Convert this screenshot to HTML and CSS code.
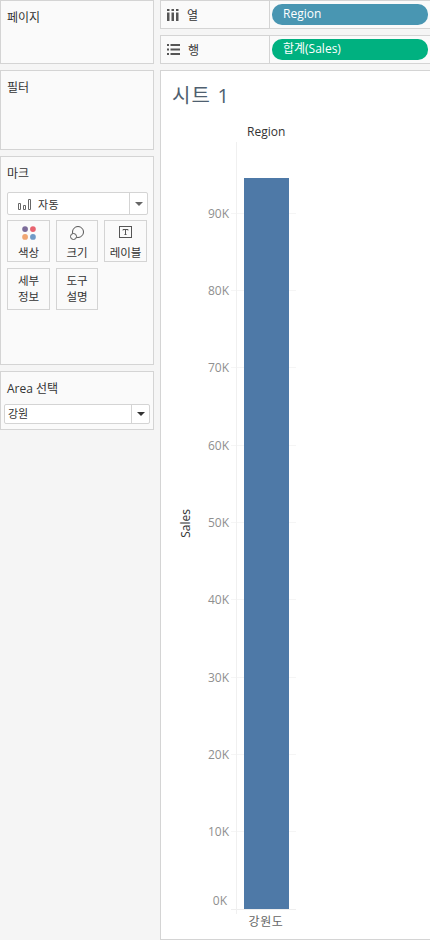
FILE: index.html
```html
<!DOCTYPE html>
<html lang="ko">
<head>
  <meta charset="UTF-8" />
  <title>시트 1</title>
  <link rel="stylesheet" href="styles.css">
</head>
<body>
  <div class="layout">
    <div class="sidebar">
      <div class="card card-pages"><div class="card-title">페이지</div></div>
      <div class="card card-filters"><div class="card-title">필터</div></div>
      <div class="card card-marks">
        <div class="card-title">마크</div>
        <div class="marks-select">
          <div class="marks-value">
            <svg width="15" height="12" viewBox="0 0 15 12"><path d="M1.5 5.5h2v6h-2zM6.5 7.5h2v4h-2zM11.5 1.5h2v10h-2z" fill="none" stroke="#666"/></svg>
            <span>자동</span>
          </div>
          <div class="select-arrow"><i class="arrow"></i></div>
        </div>
        <div class="marks-grid">
          <div class="mark-btn">
            <svg width="14" height="14" viewBox="0 0 16 16">
              <circle cx="3.5" cy="3.5" r="3.3" fill="#7b6b99"/>
              <circle cx="12.5" cy="3.5" r="3.3" fill="#e8636f"/>
              <circle cx="3.5" cy="12.5" r="3.3" fill="#f0a672"/>
              <circle cx="12.5" cy="12.5" r="3.3" fill="#6f9ac7"/>
            </svg>
            <span>색상</span>
          </div>
          <div class="mark-btn">
            <svg width="14" height="14" viewBox="0 0 14 14" fill="none" stroke="#555">
              <circle cx="8" cy="6" r="5.5"/>
              <circle cx="3.5" cy="10.5" r="3" fill="#fafafa"/>
            </svg>
            <span>크기</span>
          </div>
          <div class="mark-btn">
            <svg width="14" height="14" viewBox="0 0 14 14" fill="none" stroke="#555">
              <rect x="0.5" y="0.5" width="12" height="11"/>
              <path d="M4 4.5v-1h5v1M6.5 3.5v5M5.5 8.5h2"/>
            </svg>
            <span>레이블</span>
          </div>
          <div class="mark-btn mark-text"><span>세부<br>정보</span></div>
          <div class="mark-btn mark-text"><span>도구<br>설명</span></div>
        </div>
      </div>
      <div class="card card-area">
        <div class="card-title">Area 선택</div>
        <div class="area-select">
          <div class="area-value">강원</div>
          <div class="select-arrow"><i class="arrow arrow-dark"></i></div>
        </div>
      </div>
    </div>

    <div class="content">
      <div class="shelf">
        <div class="shelf-label">
          <svg width="12" height="12" viewBox="0 0 12 12" fill="#555"><path d="M0 0h2.5v2H0zM0 3.5h2.5V12H0zM4.5 0H7v2H4.5zM4.5 3.5H7V12H4.5zM9 0h2.5v2H9zM9 3.5h2.5V12H9z"/></svg>
          <span>열</span>
        </div>
        <div class="shelf-drop"><div class="pill pill-blue">Region</div></div>
      </div>
      <div class="shelf">
        <div class="shelf-label">
          <svg width="13" height="11" viewBox="0 0 13 11" fill="#555"><path d="M0 0h2v2H0zM3.5 0H13v2H3.5zM0 4.5h2v2H0zM3.5 4.5H13v2H3.5zM0 9h2v2H0zM3.5 9H13v2H3.5z"/></svg>
          <span>행</span>
        </div>
        <div class="shelf-drop"><div class="pill pill-green">합계(Sales)</div></div>
      </div>

      <div class="sheet">
        <h1 class="sheet-title">시트 1</h1>
        <div class="col-header">Region</div>
        <div class="chart">
          <div class="axis-title"><span>Sales</span></div>
          <div class="plot">
            <div class="axis-line"></div>
            <div class="tick"><span class="tick-label">90K</span><i class="grid"></i></div>
            <div class="tick"><span class="tick-label">80K</span><i class="grid"></i></div>
            <div class="tick"><span class="tick-label">70K</span><i class="grid"></i></div>
            <div class="tick"><span class="tick-label">60K</span><i class="grid"></i></div>
            <div class="tick"><span class="tick-label">50K</span><i class="grid"></i></div>
            <div class="tick"><span class="tick-label">40K</span><i class="grid"></i></div>
            <div class="tick"><span class="tick-label">30K</span><i class="grid"></i></div>
            <div class="tick"><span class="tick-label">20K</span><i class="grid"></i></div>
            <div class="tick"><span class="tick-label">10K</span><i class="grid"></i></div>
            <div class="tick tick-zero"><span class="tick-label">0K</span><i class="grid"></i></div>
            <div class="bar"></div>
            <div class="x-label">강원도</div>
          </div>
        </div>
      </div>
    </div>
  </div>
</body>
</html>
```

FILE: styles.css
```css
* {
  box-sizing: border-box;
}

body {
  margin: 0;
  background: #f5f5f5;
  font-family: "Open Sans", "Noto Sans CJK KR", sans-serif;
  font-size: 12px;
  color: #333;
  overflow: hidden;
}

.layout {
  display: flex;
  gap: 6px;
  height: 940px;
}

.sidebar {
  width: 154px;
  flex: none;
  display: flex;
  flex-direction: column;
  gap: 6px;
}

.card {
  background: #fafafa;
  border: 1px solid #d4d4d4;
}

.card-title {
  padding: 9px 0 0 6px;
  line-height: 16px;
}

.card-pages { height: 64px; }
.card-filters { height: 80px; }
.card-marks { height: 209px; }
.card-area { height: 59px; }

.marks-select {
  display: flex;
  height: 23px;
  margin: 10px 5px 0 6px;
  background: #fff;
  border: 1px solid #d4d4d4;
  border-radius: 2px;
}

.marks-value {
  flex: 1;
  display: flex;
  align-items: center;
  gap: 6px;
  padding-left: 9px;
  letter-spacing: 0.5px;
  font-size: 11px;
}

.select-arrow {
  width: 18px;
  display: flex;
  align-items: center;
  justify-content: center;
  border-left: 1px solid #d4d4d4;
}

.arrow {
  width: 0;
  height: 0;
  border: 4px solid transparent;
  border-top: 4px solid #666;
  border-bottom: 0;
}

.arrow-dark {
  border-top-color: #333;
}

.marks-grid {
  display: grid;
  grid-template-columns: 43px 42px 43px;
  grid-auto-rows: 42px;
  gap: 6px;
  margin: 5px 0 0 6px;
}

.mark-btn {
  display: flex;
  flex-direction: column;
  align-items: center;
  justify-content: flex-end;
  background: #fafafa;
  border: 1px solid #d4d4d4;
  font-size: 11.5px;
  line-height: 16px;
}

.mark-btn svg {
  margin-bottom: auto;
  margin-top: 5px;
}

.mark-text {
  justify-content: center;
  text-align: center;
}

.area-select {
  display: flex;
  height: 20px;
  margin: 7px 3px 0 3px;
  background: #fff;
  border: 1px solid #d4d4d4;
  border-radius: 2px;
}

.area-value {
  flex: 1;
  padding-left: 3px;
  font-size: 11px;
  line-height: 18px;
}

.content {
  flex: 1;
  min-width: 0;
  display: flex;
  flex-direction: column;
  gap: 6px;
}

.shelf {
  display: flex;
  height: 29px;
  background: #fafafa;
  border: 1px solid #d4d4d4;
  border-right: 0;
}

.shelf-label {
  width: 109px;
  display: flex;
  align-items: center;
  gap: 8px;
  padding-left: 6px;
  border-right: 1px solid #d4d4d4;
}

.shelf-drop {
  flex: 1;
  padding: 3px 2px;
}

.pill {
  height: 21px;
  padding-left: 11px;
  border-radius: 10px;
  color: #fff;
  line-height: 20px;
}

.pill-blue { background: #4996b2; }
.pill-green { background: #00b180; }

.sheet {
  flex: 1;
  min-height: 0;
  background: #fff;
  border: 1px solid #d4d4d4;
  border-right: 0;
}

.sheet-title {
  margin: 11px 0 0 11px;
  font-size: 20px;
  font-weight: 400;
  line-height: 28px;
  letter-spacing: 1.2px;
  color: #4f5f70;
}

.col-header {
  margin: 15px 0 0 86px;
  font-size: 12px;
  font-weight: 400;
  line-height: 14px;
  color: #333;
}

.chart {
  display: flex;
  margin-top: 3px;
}

.axis-title {
  width: 50px;
  display: flex;
  align-items: center;
  justify-content: center;
  height: 768px;
  padding: 0 2px 0 0;
}

.axis-title span {
  writing-mode: vertical-rl;
  transform: rotate(180deg);
  font-size: 12px;
  color: #333;
  margin-bottom: 6px;
}

.plot {
  position: relative;
  width: 85px;
  padding-top: 32.6px;
}

.axis-line {
  position: absolute;
  left: 25px;
  top: 0;
  height: 772px;
  width: 1px;
  background: #f0f0f0;
}

.tick {
  display: flex;
  align-items: center;
  height: 77.33px;
}

.tick-label {
  width: 19px;
  margin-left: -3px;
  text-align: right;
  color: #8f8f8f;
  white-space: nowrap;
}

.tick-zero .tick-label {
  transform: translateY(-9px);
}

.grid {
  width: 65px;
  height: 1px;
  margin-left: 4px;
  background: #f5f5f5;
}

.tick-zero .grid {
  background: #eee;
}

.bar {
  position: absolute;
  left: 33px;
  top: 36px;
  width: 45px;
  height: 731px;
  background: #4e79a7;
}

.x-label {
  position: absolute;
  left: 25px;
  width: 60px;
  top: 770px;
  text-align: center;
  font-size: 12px;
  letter-spacing: 0.6px;
  color: #666;
}
```
